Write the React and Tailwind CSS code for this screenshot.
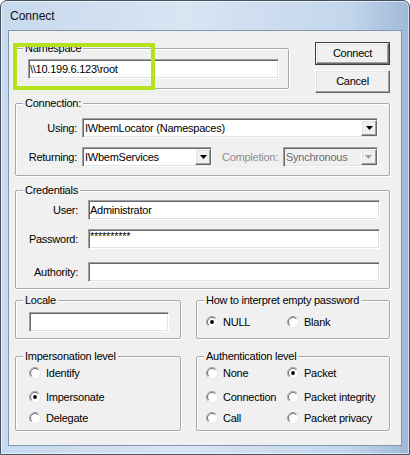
const sunken =
  "border border-t-[#a0a0a0] border-l-[#a0a0a0] border-b-white border-r-white shadow-[inset_1px_1px_0_#696969,inset_-1px_-1px_0_#e3e3e3]";
const raised =
  "border border-t-white border-l-white border-b-[#696969] border-r-[#696969] shadow-[inset_-1px_-1px_0_#a0a0a0,inset_1px_1px_0_#e3e3e3] bg-[#f0f0f0]";

function Group({ title, className = "", children }) {
  return (
    <div
      className={`relative border border-[#a9a9a9] rounded-[2px] shadow-[inset_1px_1px_0_#fff,1px_1px_0_#fff] ${className}`}
    >
      <span className="absolute -top-[8px] left-[7px] bg-[#f0f0f0] px-[2px] leading-[14px] whitespace-nowrap">
        {title}
      </span>
      {children}
    </div>
  );
}

function Field({ value, className = "" }) {
  return (
    <div className={`h-[20px] bg-white flex items-center pl-[1px] leading-[14px] ${sunken} ${className}`}>
      {value}
    </div>
  );
}

function Select({ value, disabled, className = "" }) {
  return (
    <div
      className={`h-[20px] flex items-center leading-[14px] ${sunken} ${
        disabled ? "bg-[#f0f0f0] text-[#6d6d6d]" : "bg-white"
      } ${className}`}
    >
      <span className="flex-1 pl-[2px] whitespace-nowrap overflow-hidden">{value}</span>
      <div className={`w-[16px] h-[16px] mr-[0px] flex items-center justify-center ${raised}`}>
        <svg width="7" height="4" viewBox="0 0 7 4">
          <path d="M0 0h7L3.5 4z" fill={disabled ? "#a0a0a0" : "#000"} />
        </svg>
      </div>
    </div>
  );
}

function Radio({ checked, label }) {
  return (
    <div className="flex items-center gap-[5px] h-[14px] leading-[14px] whitespace-nowrap">
      <svg width="12" height="12" viewBox="0 0 12 12" className="shrink-0">
        <circle cx="6" cy="6" r="5.5" fill="#fff" />
        <path d="M2.1 9.9A5.5 5.5 0 0 1 9.9 2.1" fill="none" stroke="#a0a0a0" strokeWidth="1" />
        <path d="M9.9 2.1A5.5 5.5 0 0 1 2.1 9.9" fill="none" stroke="#e8e8e8" strokeWidth="1" />
        <path d="M2.8 9.2A4.5 4.5 0 0 1 9.2 2.8" fill="none" stroke="#6f6f6f" strokeWidth="1" />
        {checked && <circle cx="6" cy="6" r="1.9" fill="#000" />}
      </svg>
      <span>{label}</span>
    </div>
  );
}

function Button({ label, isDefault }) {
  if (isDefault) {
    return (
      <div className="h-[23px] border border-[#3c3c3c]">
        <div className={`h-full flex items-center justify-center ${raised}`}>{label}</div>
      </div>
    );
  }
  return <div className={`h-[23px] flex items-center justify-center ${raised}`}>{label}</div>;
}

export default function App() {
  return (
    <div className="w-[410px] h-[455px] flex flex-col px-[7px] pb-[8px] border border-[#46525f] rounded-t-[7px] bg-[linear-gradient(to_right,#c7d9ee_0%,#d8e5f3_45%,#c3d6ec_85%,#9fb9d8_100%)] shadow-[inset_0_0_0_1px_rgba(255,255,255,0.55)] font-['Liberation_Sans',Arial,sans-serif] text-[11px] tracking-[-0.25px] text-black">
      <div className="h-[29px] flex items-center pl-[2px] text-[12px] tracking-normal text-[#111]">Connect</div>

      <div className="flex-1 relative bg-[#f0f0f0] border border-[#8296ae] flex flex-col pl-[6px] pt-[11px]">
        {/* top row */}
        <div className="flex items-start w-[375px]">
          <Group title="Namespace" className="mt-[6px] w-[274px] h-[41px] pl-[12px] pt-[10px]">
            <Field value="\\10.199.6.123\root" className="w-[251px]" />
          </Group>
          <div className="ml-[26px] w-[75px] flex flex-col gap-[5px]">
            <Button label="Connect" isDefault />
            <Button label="Cancel" />
          </div>
        </div>

        {/* connection */}
        <Group title="Connection:" className="mt-[10px] w-[375px] h-[73px] pt-[14px]">
          <div className="flex items-center">
            <span className="w-[61px] text-right">Using:</span>
            <Select value="IWbemLocator (Namespaces)" className="ml-[5px] w-[296px]" />
          </div>
          <div className="flex items-center mt-[9px]">
            <span className="w-[61px] text-right">Returning:</span>
            <Select value="IWbemServices" className="ml-[5px] w-[130px]" />
            <span className="ml-[10px] text-[#8d8d8d]">Completion:</span>
            <Select value="Synchronous" disabled className="ml-[5px] w-[95px]" />
          </div>
        </Group>

        {/* credentials */}
        <Group title="Credentials" className="mt-[14px] w-[375px] h-[99px] pt-[9px]">
          <div className="flex items-center">
            <span className="w-[62px] text-right">User:</span>
            <Field value="Administrator" className="ml-[10px] w-[292px]" />
          </div>
          <div className="flex items-center mt-[9px]">
            <span className="w-[62px] text-right">Password:</span>
            <Field
              value={<span className="self-start leading-[10px] pt-[1px]">**********</span>}
              className="ml-[10px] w-[292px]"
            />
          </div>
          <div className="flex items-center mt-[13px]">
            <span className="w-[62px] text-right">Authority:</span>
            <Field value="" className="ml-[10px] w-[292px]" />
          </div>
        </Group>

        {/* locale / empty password */}
        <div className="flex mt-[11px]">
          <Group title="Locale" className="w-[166px] h-[39px] pl-[13px] pt-[11px]">
            <Field value="" className="w-[140px]" />
          </Group>
          <Group title="How to interpret empty password" className="ml-[15px] w-[194px] h-[39px] pl-[9px] pt-[14px]">
            <div className="grid grid-cols-[81px_auto]">
              <Radio checked label="NULL" />
              <Radio label="Blank" />
            </div>
          </Group>
        </div>

        {/* impersonation / authentication */}
        <div className="flex mt-[17px]">
          <Group title="Impersonation level" className="w-[166px] h-[75px] pl-[13px] pt-[9px]">
            <div className="flex flex-col">
              <Radio label="Identify" />
              <div className="mt-[10px]">
                <Radio checked label="Impersonate" />
              </div>
              <div className="mt-[7px]">
                <Radio label="Delegate" />
              </div>
            </div>
          </Group>
          <Group title="Authentication level" className="ml-[15px] w-[194px] h-[75px] pl-[9px] pt-[9px]">
            <div className="grid grid-cols-[81px_auto] grid-rows-[14px_14px_14px] gap-y-0">
              <Radio label="None" />
              <Radio checked label="Packet" />
              <div className="mt-[10px]">
                <Radio label="Connection" />
              </div>
              <div className="mt-[10px]">
                <Radio label="Packet integrity" />
              </div>
              <div className="mt-[17px]">
                <Radio label="Call" />
              </div>
              <div className="mt-[17px]">
                <Radio label="Packet privacy" />
              </div>
            </div>
          </Group>
        </div>

        {/* highlight marker */}
        <div className="absolute left-[4px] top-[12px] w-[142px] h-[47px] border-[4px] border-[#b4e31e] pointer-events-none" />
      </div>
    </div>
  );
}
